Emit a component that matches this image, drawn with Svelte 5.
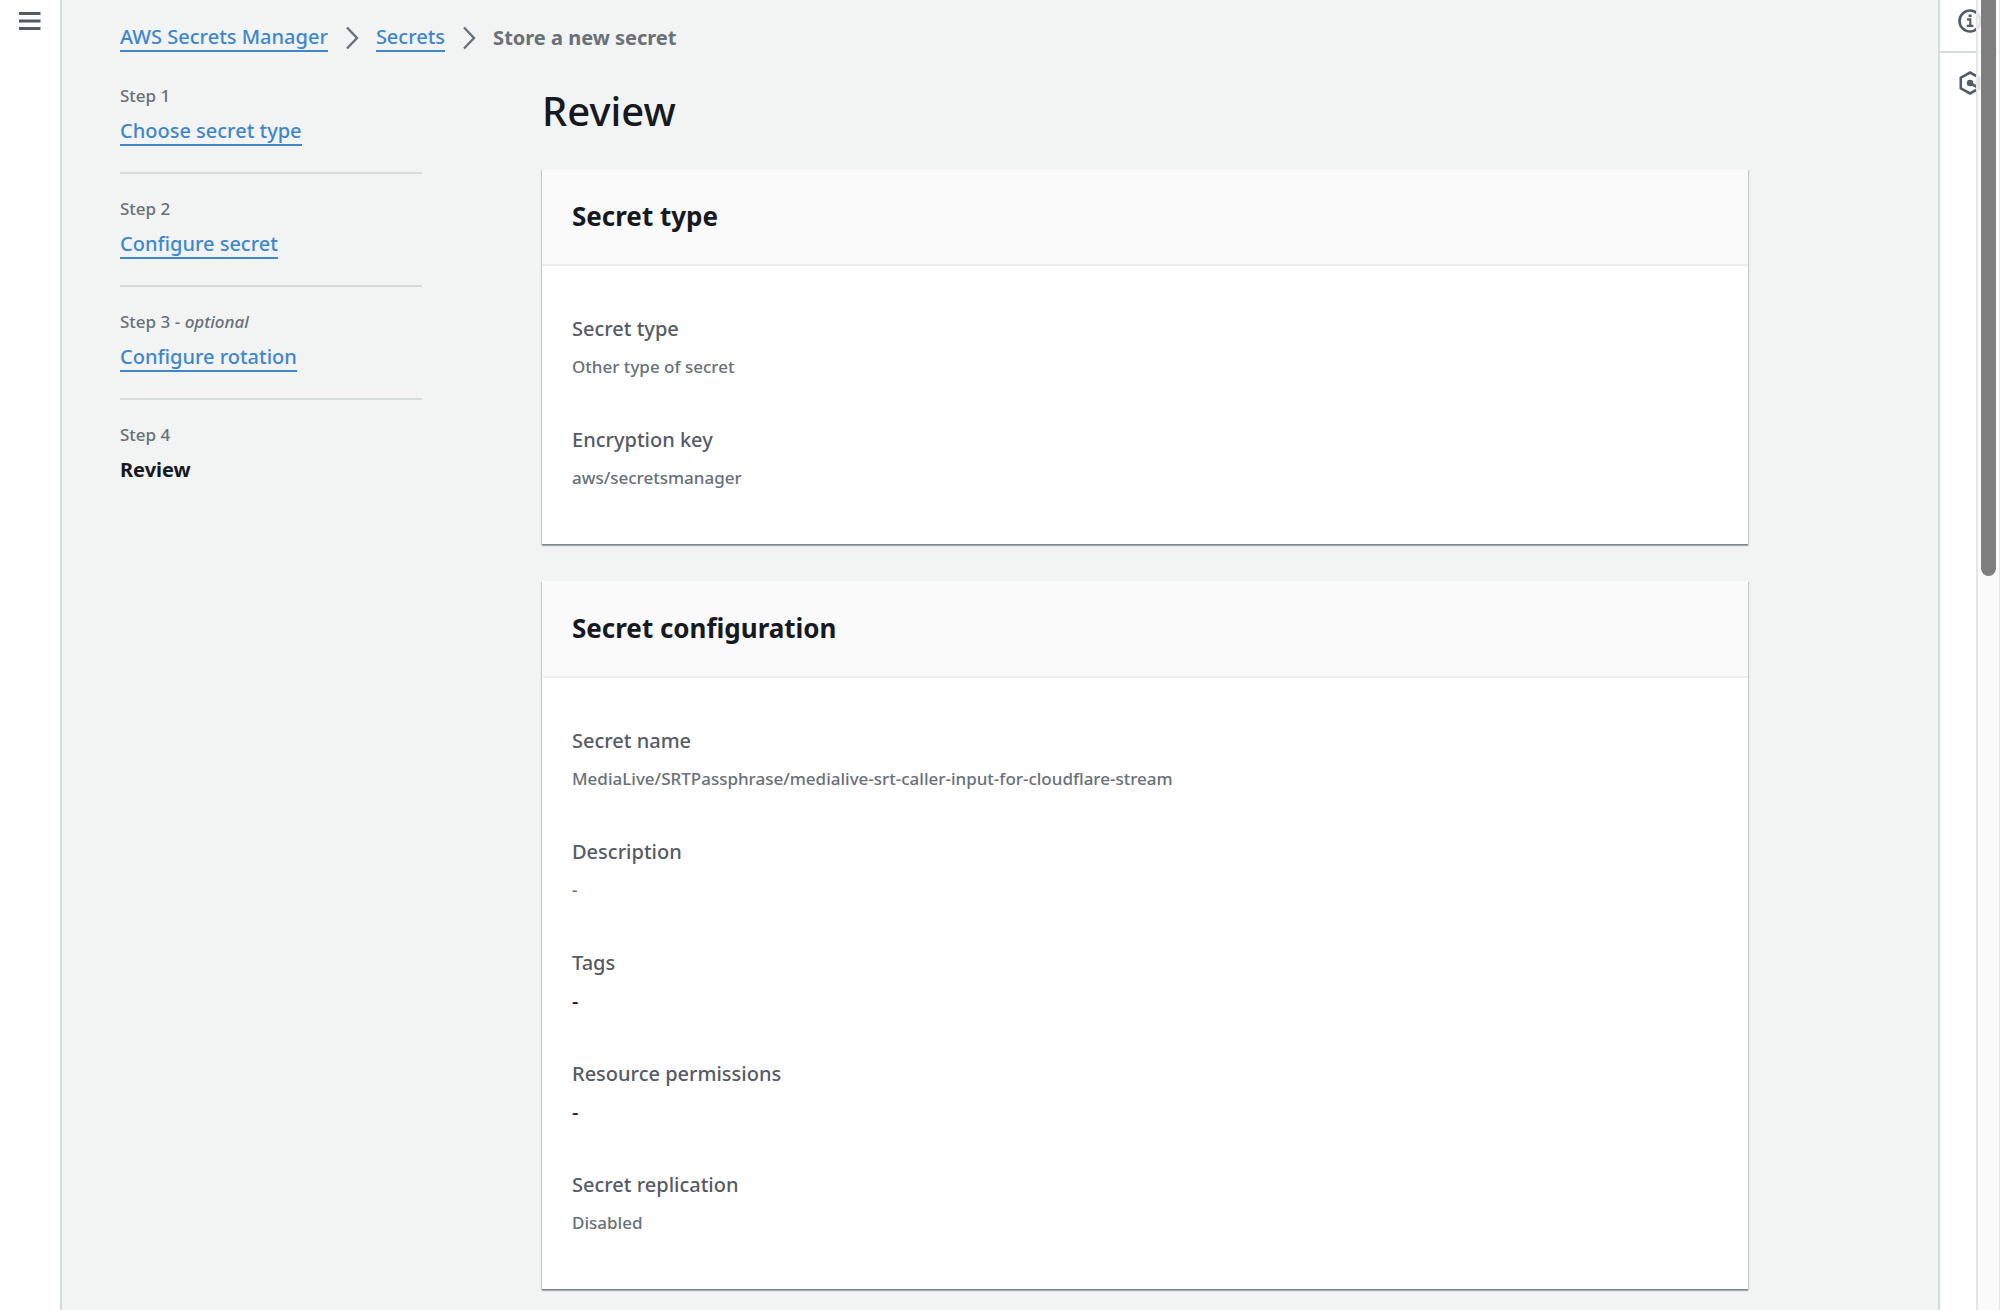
<script lang="ts">
  interface Step {
    label: string;
    title: string;
    optional?: boolean;
  }

  interface Field {
    name: string;
    value: string;
    plain?: boolean;
  }

  interface Panel {
    title: string;
    fields: Field[];
  }

  const crumbs = ['AWS Secrets Manager', 'Secrets'];

  const steps: Step[] = [
    { label: 'Step 1', title: 'Choose secret type' },
    { label: 'Step 2', title: 'Configure secret' },
    { label: 'Step 3', title: 'Configure rotation', optional: true },
    { label: 'Step 4', title: 'Review' }
  ];

  const panels: Panel[] = [
    {
      title: 'Secret type',
      fields: [
        { name: 'Secret type', value: 'Other type of secret' },
        { name: 'Encryption key', value: 'aws/secretsmanager' }
      ]
    },
    {
      title: 'Secret configuration',
      fields: [
        { name: 'Secret name', value: 'MediaLive/SRTPassphrase/medialive-srt-caller-input-for-cloudflare-stream' },
        { name: 'Description', value: '-' },
        { name: 'Tags', value: '-', plain: true },
        { name: 'Resource permissions', value: '-', plain: true },
        { name: 'Secret replication', value: 'Disabled' }
      ]
    }
  ];

  let current = $state(3);
</script>

<div class="layout">
  <aside class="rail rail-left">
    <button class="rail-button" aria-label="Open navigation">
      <svg width="24" height="24" viewBox="0 0 24 24" fill="none" stroke="#545b64" stroke-width="3">
        <path d="M1 4.5h21.5M1 12h21.5M1 19.5h21.5" />
      </svg>
    </button>
  </aside>

  <div class="page">
    <nav class="breadcrumbs" aria-label="Breadcrumbs">
      {#each crumbs as crumb}
        <a class="link" href="#top">{crumb}</a>
        <svg width="14" height="24" viewBox="0 0 14 24" fill="none" stroke="#687078" stroke-width="2.4">
          <path d="M2 1.5l10 10.5L2 22.5" />
        </svg>
      {/each}
      <span class="crumb-current">Store a new secret</span>
    </nav>

    <div class="wizard">
      <nav aria-label="Steps">
        <ol class="steps">
          {#each steps as step, i}
            <li class="step">
              <span class="step-label">{step.label}{#if step.optional}{' '}- <em>optional</em>{/if}</span>
              {#if i === current}
                <span class="step-current">{step.title}</span>
              {:else}
                <a class="link" href="#step-{i + 1}">{step.title}</a>
              {/if}
            </li>
          {/each}
        </ol>
      </nav>

      <main class="content">
        <h1>Review</h1>
        {#each panels as panel}
          <section class="panel">
            <h2>{panel.title}</h2>
            <dl>
              {#each panel.fields as field}
                <div class="field">
                  <dt>{field.name}</dt>
                  <dd class:plain={field.plain}>{field.value}</dd>
                </div>
              {/each}
            </dl>
          </section>
        {/each}
      </main>
    </div>
  </div>

  <aside class="rail rail-right">
    <button class="rail-button" aria-label="Info">
      <svg width="24" height="24" viewBox="0 0 24 24" fill="none" stroke="#545b64" stroke-width="2.6">
        <circle cx="12" cy="12" r="10.5" />
        <path d="M9 10.4h3.3v6.4M8.8 16.8h6.6" stroke-width="2.2" />
        <path d="M10.6 6.8h3" />
      </svg>
    </button>
    <button class="rail-button" aria-label="Tutorials">
      <svg width="24" height="24" viewBox="0 0 24 24" fill="none" stroke="#545b64" stroke-width="2.6">
        <path d="M12 1.5l9.2 5.2v10.6L12 22.5l-9.2-5.2V6.7z" />
        <circle cx="12" cy="12" r="3.2" fill="#545b64" stroke="none" />
        <path d="M12 12l7 4" />
      </svg>
    </button>
  </aside>

  <div class="scrollbar" aria-hidden="true">
    <div class="thumb"></div>
  </div>
</div>

<style>
  :global(body) {
    background: #f2f3f3;
  }

  .layout {
    display: flex;
    min-height: 100vh;
    font-family: 'Noto Sans', 'Open Sans', sans-serif;
    font-size: 20px;
    font-weight: 500;
    line-height: 30px;
    color: #16191f;
  }

  .rail {
    flex: 0 0 60px;
    background: #fff;
  }

  .rail-left {
    border-right: 2px solid #d5dbdb;
  }

  .rail-right {
    border-left: 2px solid #d5dbdb;
  }

  .rail-button {
    display: flex;
    align-items: center;
    justify-content: center;
    width: 100%;
    height: 60px;
    padding: 0;
    border: 0;
    background: none;
    cursor: pointer;
  }

  .rail-left .rail-button {
    height: 42px;
  }

  .rail-right .rail-button:first-child {
    height: 53px;
    padding-bottom: 10px;
    border-bottom: 2px solid #d5dbdb;
  }

  .page {
    flex: 1;
    min-width: 0;
    padding: 24px 190px 20px 58px;
    background: #f2f3f3;
  }

  .link {
    color: #3f87cb;
    line-height: 26px;
    text-decoration: none;
    border-bottom: 2px solid #3f87cb;
  }

  .breadcrumbs {
    display: flex;
    align-items: center;
    gap: 17px;
    height: 28px;
  }

  .crumb-current {
    color: #687078;
    font-weight: 700;
  }

  .wizard {
    display: grid;
    grid-template-columns: 302px minmax(0, 1fr);
    gap: 120px;
    padding-top: 30px;
  }

  .steps {
    margin: 0;
    padding: 0;
    list-style: none;
  }

  .step {
    display: flex;
    flex-direction: column;
    align-items: flex-start;
    gap: 8px;
    height: 90px;
    margin-bottom: 21px;
    border-bottom: 2px solid #d5dbdb;
  }

  .step:last-child {
    border-bottom: 0;
  }

  .step-label {
    font-size: 17px;
    line-height: 28px;
    color: #687078;
  }

  .step-current {
    font-weight: 700;
    line-height: 26px;
  }

  h1 {
    margin: 0 0 29px;
    font-size: 40px;
    line-height: 58px;
    font-weight: 500;
  }

  .panel {
    margin-bottom: 37px;
    background: #fff;
    box-shadow:
      0 2px 1px rgba(0, 28, 36, 0.3),
      1px 1px 1px rgba(0, 28, 36, 0.15),
      -1px 1px 1px rgba(0, 28, 36, 0.15);
  }

  h2 {
    margin: 0;
    padding: 30px;
    font-size: 26px;
    line-height: 35px;
    font-weight: 700;
    background: #fafafa;
    border-bottom: 2px solid #eaeded;
  }

  dl {
    display: grid;
    gap: 42px;
    margin: 0;
    padding: 46px 30px 52px;
  }

  .field {
    display: grid;
    gap: 7px;
  }

  dt {
    color: #545b64;
    line-height: 34px;
  }

  dd {
    margin: 0;
    font-size: 17px;
    line-height: 28px;
    color: #687078;
    overflow-wrap: anywhere;
  }

  .plain {
    font-size: 20px;
    color: #16191f;
  }

  .scrollbar {
    position: fixed;
    top: 0;
    right: 0;
    bottom: 0;
    box-sizing: border-box;
    width: 24px;
    padding: 0 3px;
    background: rgba(250, 250, 250, 0.85);
    border: solid #e4e7e7;
    border-width: 0 1px 0 2px;
  }

  .thumb {
    height: 44%;
    border-radius: 0 0 9px 9px;
    background: #7d7e7d;
  }
</style>
